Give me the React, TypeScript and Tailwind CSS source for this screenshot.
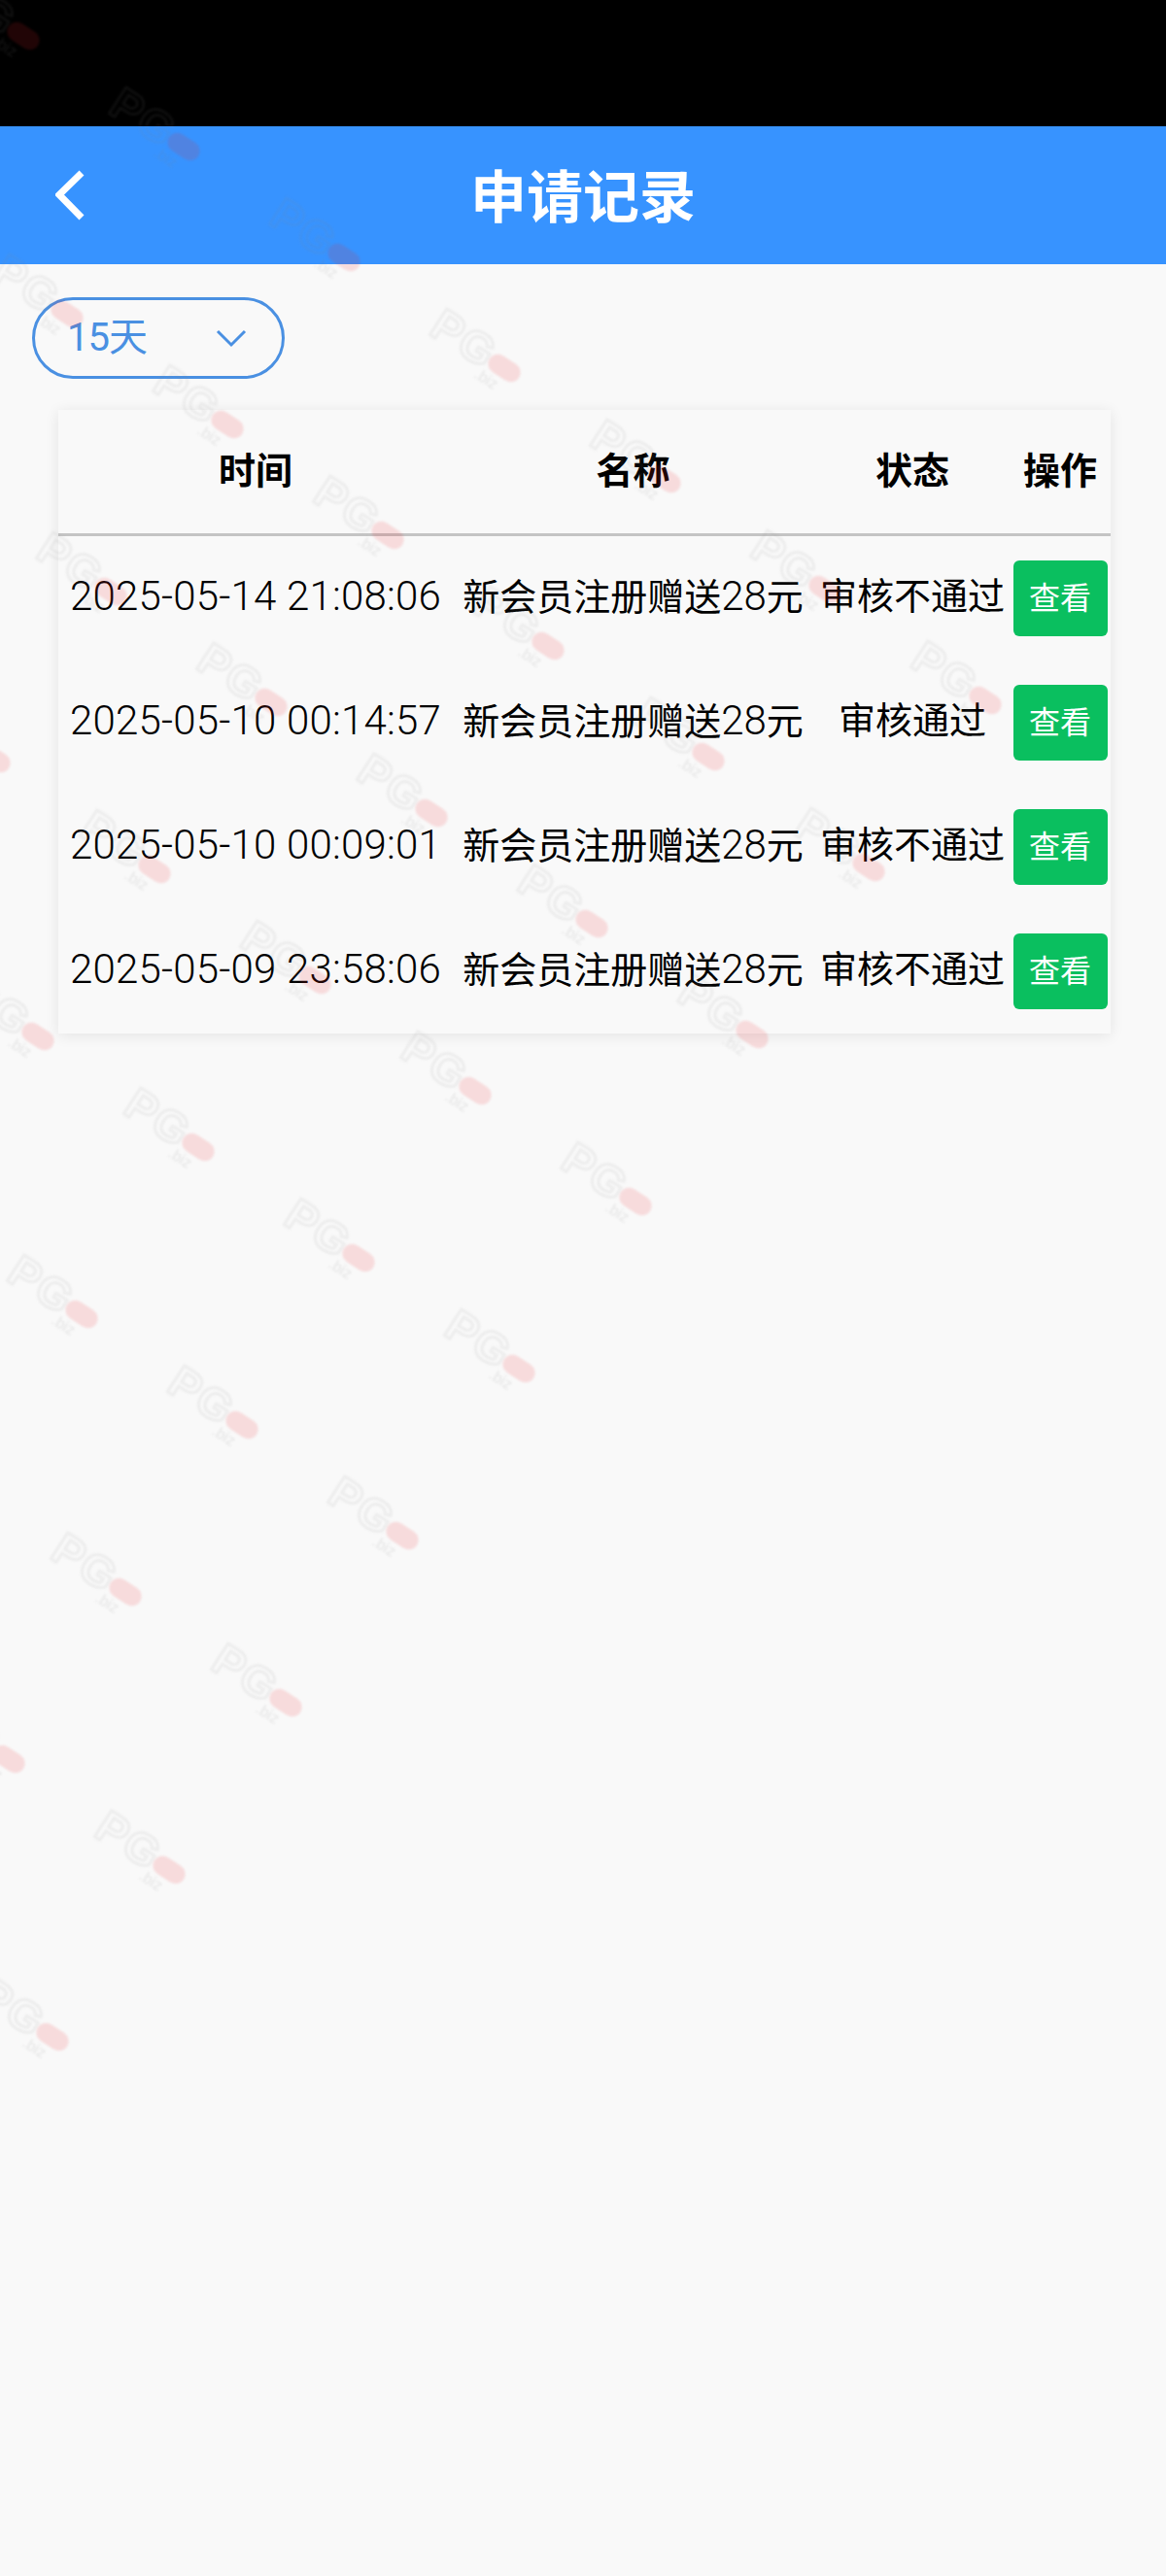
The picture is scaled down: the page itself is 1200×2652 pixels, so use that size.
const marks: [number, number][] = [];
// watermark lattice: i runs down-right, j runs down-left
const rows: [number, number, number][] = [
  [0, -1, 5],
  [1, 0, 5],
  [2, 1, 5],
  [3, 1, 5],
  [4, 2, 5],
  [5, 3, 5],
  [6, 4, 5],
  [7, 4, 5],
  [8, 5, 5],
];
rows.forEach(([j, from, to]) => {
  for (let i = from; i <= to; i++) {
    marks.push([189 + i * 165 - j * 120, 151 + i * 114 + j * 172]);
  }
});

const records = [
  { time: "2025-05-14 21:08:06", status: "审核不通过" },
  { time: "2025-05-10 00:14:57", status: "审核通过" },
  { time: "2025-05-10 00:09:01", status: "审核不通过" },
  { time: "2025-05-09 23:58:06", status: "审核不通过" },
];

function Watermark({ x, y }: { x: number; y: number }) {
  // x, y is the centre of the red pill
  return (
    <svg
      className="absolute blur-[1px]"
      width="110"
      height="70"
      viewBox="0 0 110 70"
      style={{ left: x - 86, top: y - 25, transform: "rotate(33deg)", transformOrigin: "86px 25px" }}
    >
      <text
        x="0"
        y="38"
        fontFamily="'Liberation Sans', sans-serif"
        fontSize="46"
        fontWeight="700"
        fill="none"
        stroke="#808080"
        strokeOpacity="0.12"
        strokeWidth="2.5"
        letterSpacing="2"
      >
        PG
      </text>
      <rect x="68" y="15" width="36" height="20" rx="10" fill="#e8202c" fillOpacity="0.14" />
      <text
        x="64"
        y="50"
        fontFamily="'Liberation Sans', sans-serif"
        fontSize="16"
        fill="#808080"
        fillOpacity="0.16"
      >
        .biz
      </text>
    </svg>
  );
}

export default function App() {
  return (
    <div className="relative w-[1200px] h-[2652px] overflow-hidden bg-[#f9f9f9] text-black font-['Roboto','Noto_Sans_CJK_SC',sans-serif]">
      <div className="h-[130px] bg-black" />
      <header className="relative h-[142px] bg-[#3793ff] flex items-center justify-center pb-[4px]">
        <svg className="absolute left-[57px] top-[45px]" width="30" height="52" viewBox="0 0 30 52" fill="none">
          <path d="M27 3 L4 25.5 L27 49" stroke="#fff" strokeWidth="7" />
        </svg>
        <h1 className="text-[58px] leading-none font-bold text-white font-['Noto_Sans_CJK_SC',sans-serif]">申请记录</h1>
      </header>
      <main className="pt-[34px]">
        <div className="ml-[33px] w-[260px] h-[84px] rounded-[42px] border-[3px] border-[#4a90e2] flex items-center justify-between pl-[33px] pr-[36px] text-[#4a90e2] text-[40px]">
          <span className="tracking-[-1px]">15天</span>
          <svg width="32" height="20" viewBox="0 0 32 20" fill="none">
            <path d="M2 3 L16 17 L30 3" stroke="#4a90e2" strokeWidth="3" />
          </svg>
        </div>
        <div className="ml-[60px] mt-[32px] w-[1083px] shadow-[0_2px_14px_rgba(0,0,0,0.09)]">
          <div className="grid grid-cols-[406px_371px_204px_100px] h-[130px] pb-[8px] border-b-[3px] border-[#c4c4c4] items-center text-center text-[38px] font-bold font-['Noto_Sans_CJK_SC',sans-serif]">
            <span>时间</span>
            <span>名称</span>
            <span>状态</span>
            <span>操作</span>
          </div>
          {records.map((r) => (
            <div
              key={r.time}
              className="grid grid-cols-[406px_371px_204px_100px] h-[128px] items-center text-center whitespace-nowrap"
            >
              <span className="text-[42px] leading-none pb-[4px] font-[350] tracking-[0.2px]">{r.time}</span>
              <span className="text-[38px] leading-none pb-[5px]">
                新会员注册赠送<span className="text-[42px] font-[350]">28</span>元
              </span>
              <span className="text-[38px] leading-none pb-[5px]">{r.status}</span>
              <span className="flex justify-center">
                <button className="w-[97px] h-[78px] pb-[6px] rounded-[6px] bg-[#0abf5f] text-white text-[32px] font-['Noto_Sans_CJK_SC',sans-serif]">
                  查看
                </button>
              </span>
            </div>
          ))}
        </div>
      </main>
      <div className="absolute inset-0 pointer-events-none">
        {marks.map(([x, y]) => (
          <Watermark key={`${x}-${y}`} x={x} y={y} />
        ))}
      </div>
    </div>
  );
}
